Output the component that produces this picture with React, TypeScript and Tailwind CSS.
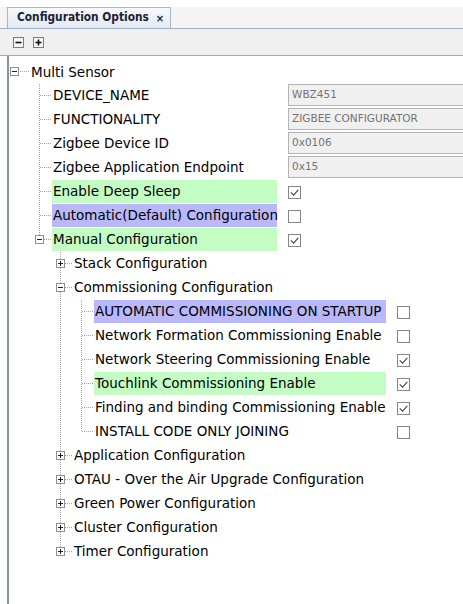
import React from "react";

type Node = {
  label: string;
  kind?: "field" | "check";
  value?: string;
  checked?: boolean;
  hl?: "green" | "purple";
  open?: boolean;
  children?: Node[];
  labelWidth?: number;
};

const commissioning: Node[] = [
  { label: "AUTOMATIC COMMISSIONING ON STARTUP", kind: "check", checked: false, hl: "purple" },
  { label: "Network Formation Commissioning Enable", kind: "check", checked: false },
  { label: "Network Steering Commissioning Enable", kind: "check", checked: true },
  { label: "Touchlink Commissioning Enable", kind: "check", checked: true, hl: "green" },
  { label: "Finding and binding Commissioning Enable", kind: "check", checked: true },
  { label: "INSTALL CODE ONLY JOINING", kind: "check", checked: false },
];

const manual: Node[] = [
  { label: "Stack Configuration", children: [] },
  { label: "Commissioning Configuration", open: true, children: commissioning, labelWidth: 292 },
  { label: "Application Configuration", children: [] },
  { label: "OTAU - Over the Air Upgrade Configuration", children: [] },
  { label: "Green Power Configuration", children: [] },
  { label: "Cluster Configuration", children: [] },
  { label: "Timer Configuration", children: [] },
];

const root: Node = {
  label: "Multi Sensor",
  open: true,
  labelWidth: 225,
  children: [
    { label: "DEVICE_NAME", kind: "field", value: "WBZ451" },
    { label: "FUNCTIONALITY", kind: "field", value: "ZIGBEE CONFIGURATOR" },
    { label: "Zigbee Device ID", kind: "field", value: "0x0106" },
    { label: "Zigbee Application Endpoint", kind: "field", value: "0x15" },
    { label: "Enable Deep Sleep", kind: "check", checked: true, hl: "green" },
    { label: "Automatic(Default) Configuration", kind: "check", checked: false, hl: "purple" },
    { label: "Manual Configuration", kind: "check", checked: true, hl: "green", open: true, children: manual },
  ],
};

const DOT = "#a3a3a3";

function Expander({ open, x }: { open: boolean; x: number }) {
  return (
    <>
      <rect x={x + 0.5} y={7.5} width={8} height={8} fill="#fff" stroke="#8f8f8f" />
      <path d={`M${x + 2} 11.5H${x + 7}`} stroke="#222" />
      {!open && <path d={`M${x + 4.5} 9V14`} stroke="#222" />}
    </>
  );
}

// guide cell for one tree level
function Guide({ mode, expander, open }: { mode: "pass" | "empty" | "mid" | "last"; expander?: boolean; open?: boolean }) {
  return (
    <svg width="21" height="24" className="shrink-0 block">
      {mode === "pass" && <path d="M8.5 0V24" stroke={DOT} strokeDasharray="1 1" />}
      {(mode === "mid" || mode === "last") && (
        <>
          <path d={expander ? "M8.5 0V7" : "M8.5 0V12"} stroke={DOT} strokeDasharray="1 1" />
          {mode === "mid" && <path d={expander ? "M8.5 16V24" : "M8.5 12V24"} stroke={DOT} strokeDasharray="1 1" />}
          <path d={expander ? "M13 11.5H20" : "M9 11.5H20"} stroke={DOT} strokeDasharray="1 1" />
          {expander && <Expander open={!!open} x={4} />}
        </>
      )}
    </svg>
  );
}

function Check({ checked }: { checked: boolean }) {
  return (
    <svg width="13" height="13" className="block">
      <rect x="0.5" y="0.5" width="12" height="12" fill="#fff" stroke="#858585" />
      {checked && <path d="M2.8 6.3L5.6 9.1L10.3 3.9" fill="none" stroke="#4a4a4a" strokeWidth="1.2" />}
    </svg>
  );
}

function Row({ node, trail, last, labelWidth }: { node: Node; trail: boolean[]; last: boolean; labelWidth?: number }) {
  const hasKids = !!node.children;
  const hlClass =
    node.hl === "green" ? "bg-[#c3fdc3]" : node.hl === "purple" ? "bg-[#b8b8fa]" : "";
  return (
    <div className="flex h-[24px] items-center">
      <div className="w-[21px] shrink-0" />
      {trail.map((cont, i) => (
        <Guide key={i} mode={cont ? "pass" : "empty"} />
      ))}
      <Guide mode={last ? "last" : "mid"} expander={hasKids} open={node.open} />
      <div className="flex h-full shrink-0 items-center" style={labelWidth ? { width: labelWidth } : undefined}>
        <span className={`flex h-[23px] items-center self-start pl-[1px] pr-[2px] whitespace-nowrap ${labelWidth ? "w-full" : ""} ${hlClass}`}>
          {node.label}
        </span>
      </div>
      {node.kind === "field" && (
        <div className="ml-[11px] flex h-[22px] w-[200px] shrink-0 items-center self-start border border-[#b4b4b4] bg-[#f0f0f0] pl-[3px] text-[10.5px] text-[#737373]">
          {node.value}
        </div>
      )}
      {node.kind === "check" && (
        <div className="ml-[11px] shrink-0">
          <Check checked={!!node.checked} />
        </div>
      )}
    </div>
  );
}

function Branch({ nodes, trail, labelWidth }: { nodes: Node[]; trail: boolean[]; labelWidth?: number }) {
  return (
    <>
      {nodes.map((n, i) => {
        const last = i === nodes.length - 1;
        return (
          <React.Fragment key={n.label}>
            <Row node={n} trail={trail} last={last} labelWidth={labelWidth} />
            {n.open && n.children && (
              <Branch nodes={n.children} trail={[...trail, !last]} labelWidth={n.labelWidth} />
            )}
          </React.Fragment>
        );
      })}
    </>
  );
}

function ToolButton({ plus }: { plus?: boolean }) {
  return (
    <svg width="11" height="11" className="block">
      <rect x="0.5" y="0.5" width="10" height="10" fill="#f6f6f6" stroke="#7c7c7c" />
      <path d="M2.5 5.5H8.5" stroke="#111" strokeWidth="1.6" />
      {plus && <path d="M5.5 2.5V8.5" stroke="#111" strokeWidth="1.6" />}
    </svg>
  );
}

export default function App() {
  return (
    <div
      className="h-[604px] w-[463px] overflow-hidden bg-white text-[13.5px] text-black"
      style={{ fontFamily: '"DejaVu Sans", Verdana, sans-serif' }}
    >
      <div className="h-[7px]" />
      <div className="flex h-[22px] border-b border-[#9fb1ca] bg-[#f4f4f4]">
        <div className="ml-[7px] flex w-[164px] items-center gap-[7px] border border-b-0 border-[#a9b7ca] bg-gradient-to-b from-[#f7f9fd] to-[#e3e9f3] pl-[9px] text-[11.8px] font-bold text-[#1c2236]">
          <span style={{ fontFamily: '"DejaVu Sans Condensed", "DejaVu Sans", sans-serif' }}>Configuration Options</span>
          <span className="text-[10px]">×</span>
        </div>
      </div>
      <div className="flex h-[27px] items-center gap-[9px] border-b border-[#ababab] bg-[#f0f0f0] pl-[13px]">
        <ToolButton />
        <ToolButton plus />
      </div>
      <div className="ml-[7px] h-full border-l-2 border-[#8494a8] pl-[1px] pt-[4px]">
        <div className="flex h-[24px] items-center">
          <svg width="21" height="24" className="block shrink-0">
            <Expander open x={0} />
            <path d="M10 11.5H20" stroke={DOT} strokeDasharray="1 1" />
          </svg>
          <span className="whitespace-nowrap">{root.label}</span>
        </div>
        <Branch nodes={root.children!} trail={[]} labelWidth={root.labelWidth} />
      </div>
    </div>
  );
}
